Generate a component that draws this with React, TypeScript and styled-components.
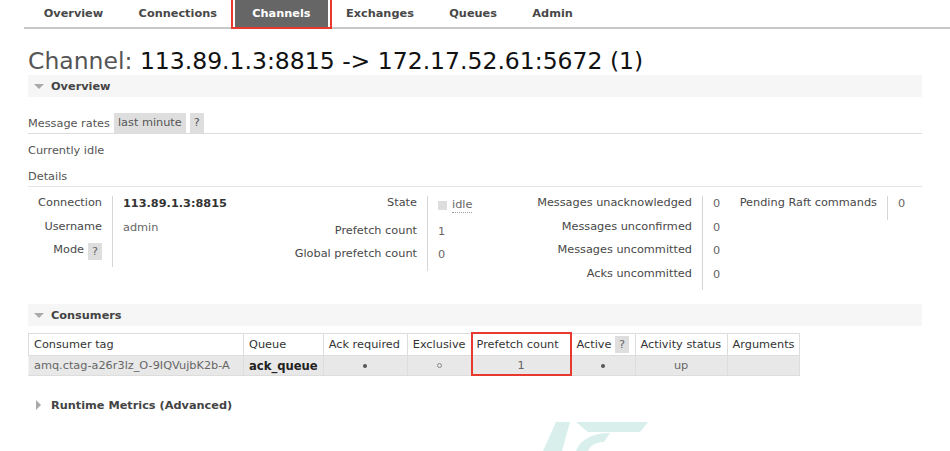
import React from "react";
import styled, { createGlobalStyle } from "styled-components";

const Global = createGlobalStyle`
  html, body { margin: 0; padding: 0; background: #fff; }
  body {
    font-family: "DejaVu Sans", Verdana, sans-serif;
    font-size: 11.3px;
    color: #484848;
    width: 950px;
    height: 451px;
    overflow: hidden;
  }
`;

const Page = styled.div`
  position: relative;
  width: 950px;
  height: 451px;
`;

const Nav = styled.nav`
  margin-left: 24px;
  border-bottom: 2px solid #c8c8c8;
  height: 27px;
`;

const TabList = styled.ul`
  list-style: none;
  margin: 0;
  padding: 0 0 0 2px;
  display: flex;
  height: 27px;
`;

const Tab = styled.li<{ $active?: boolean; $marked?: boolean }>`
  position: relative;
  padding: 0 17.7px;
  line-height: 27px;
  font-weight: bold;
  color: ${(p) => (p.$active ? "#fff" : "#484848")};
  background: ${(p) => (p.$active ? "#666" : "transparent")};
  ${(p) =>
    p.$marked &&
    `&::after {
      content: "";
      position: absolute;
      left: -4px; right: -4px; top: -2px; bottom: -2px;
      border: 2px solid #e8392f;
    }`}
`;

const Main = styled.main`
  padding: 0 28px;
`;

const Title = styled.h1`
  margin: 18px 0 0;
  font-size: 23.5px;
  line-height: 28px;
  font-weight: normal;
  color: #555;
  white-space: nowrap;
`;

const TitleName = styled.span`
  color: #111;
`;

const SectionHeader = styled.div<{ $open?: boolean }>`
  display: flex;
  align-items: center;
  height: 22px;
  background: ${(p) => (p.$open ? "#f6f6f6" : "transparent")};
  padding-left: 6px;
  font-weight: bold;
  color: #444;
  gap: 7px;
`;

const TriDown = styled.span`
  width: 0;
  height: 0;
  border-left: 5px solid transparent;
  border-right: 5px solid transparent;
  border-top: 5px solid #aaa;
`;

const TriRight = styled.span`
  width: 0;
  height: 0;
  margin-left: 2px;
  margin-right: 3px;
  border-top: 5px solid transparent;
  border-bottom: 5px solid transparent;
  border-left: 5px solid #aaa;
`;

const RatesRow = styled.div`
  display: flex;
  align-items: center;
  gap: 4px;
  margin-top: 16px;
  height: 20px;
  border-bottom: 1px solid #ddd;
  color: #555;
`;

const Pill = styled.span`
  background: #dedede;
  padding: 0 4px;
  line-height: 20px;
  color: #555;
`;

const Help = styled.span`
  background: #dedede;
  padding: 0 4px;
  line-height: 17px;
  display: inline-block;
  color: #666;
`;

const Line = styled.div`
  margin-top: 7px;
  line-height: 20px;
  color: #555;
`;

const SubHeading = styled.div`
  margin-top: 6px;
  line-height: 19px;
  border-bottom: 1px solid #e4e4e4;
  color: #555;
`;

const FactsRow = styled.div`
  display: flex;
  margin-top: 9px;
`;

const Facts = styled.div<{ $th: number; $td: number }>`
  display: grid;
  grid-template-columns: ${(p) => p.$th}px ${(p) => p.$td}px;
  grid-auto-rows: auto;
  align-content: start;
`;

const FactLabel = styled.div`
  text-align: right;
  padding: 0 10px 0 0;
  height: 23.5px;
  line-height: 14px;
  color: #484848;
  white-space: nowrap;
  display: flex;
  justify-content: flex-end;
  align-items: flex-start;
  gap: 4px;
`;

const FactValue = styled.div<{ $bold?: boolean; $pad?: number; $tall?: boolean }>`
  border-left: 1px solid #d6d6d6;
  padding: ${(p) => p.$pad ?? 0}px 0 0 10px;
  height: ${(p) => (p.$tall ? 27.5 : 23.5)}px;
  box-sizing: border-box;
  line-height: 14px;
  font-weight: ${(p) => (p.$bold ? "bold" : "normal")};
  color: ${(p) => (p.$bold ? "#333" : "#666")};
  white-space: nowrap;
  display: flex;
  align-items: flex-start;
`;

const StateBox = styled.span`
  display: inline-block;
  width: 9px;
  height: 9px;
  background: #ddd;
  margin: 3px 5px 0 0;
`;

const Abbr = styled.span`
  border-bottom: 1px dotted #999;
  color: #666;
`;

const ConsumersHeader = styled(SectionHeader)`
  margin-top: 14px;
`;

const Table = styled.table`
  margin-top: 7px;
  border-collapse: collapse;
  table-layout: fixed;
  border: 1px solid #ddd;
`;

const HeadCell = styled.th<{ $w: number; $marked?: boolean }>`
  position: relative;
  width: ${(p) => p.$w}px;
  box-sizing: border-box;
  height: 22px;
  padding: 0 5px;
  font-weight: normal;
  text-align: left;
  color: #333;
  border: 1px solid #ddd;
  background: #fff;
  white-space: nowrap;
  ${(p) =>
    p.$marked &&
    `&::after {
      content: "";
      position: absolute;
      left: -1px; right: -1px; top: -2px; bottom: -21px;
      border: 2px solid #e8392f;
      z-index: 2;
    }`}
`;

const DataCell = styled.td<{ $center?: boolean; $bold?: boolean }>`
  height: 20px;
  box-sizing: border-box;
  padding: 0 5px;
  line-height: 18px;
  background: #e8e8e8;
  border: 1px solid #ddd;
  border-top: none;
  border-left-color: #f3f3f3;
  text-align: ${(p) => (p.$center ? "center" : "left")};
  font-weight: ${(p) => (p.$bold ? "bold" : "normal")};
  color: ${(p) => (p.$bold ? "#222" : "#666")};
  font-size: ${(p) => (p.$bold ? "11.6px" : "11.3px")};
  white-space: nowrap;
`;

const Dot = styled.span<{ $open?: boolean }>`
  display: inline-block;
  width: 4px;
  height: 4px;
  border-radius: 50%;
  vertical-align: middle;
  box-sizing: border-box;
  ${(p) =>
    p.$open
      ? "border: 1px solid #888; width: 5px; height: 5px;"
      : "background: #555;"}
`;

const RuntimeHeader = styled(SectionHeader)`
  margin-top: 18px;
`;

const Watermark = styled.svg`
  position: absolute;
  left: 540px;
  top: 418px;
`;

const tabs = ["Overview", "Connections", "Channels", "Exchanges", "Queues", "Admin"];

const columns: { label: React.ReactNode; w: number; marked?: boolean }[] = [
  { label: "Consumer tag", w: 215 },
  { label: "Queue", w: 79 },
  { label: "Ack required", w: 84 },
  { label: "Exclusive", w: 62 },
  { label: "Prefetch count", w: 100, marked: true },
  {
    label: (
      <>
        Active <Help>?</Help>
      </>
    ),
    w: 64,
  },
  { label: "Activity status", w: 92 },
  { label: "Arguments", w: 72 },
];

export default function App() {
  return (
    <Page>
      <Global />
      <Nav>
        <TabList>
          {tabs.map((t) => (
            <Tab key={t} $active={t === "Channels"} $marked={t === "Channels"}>
              {t}
            </Tab>
          ))}
        </TabList>
      </Nav>
      <Main>
        <Title>
          Channel: <TitleName>113.89.1.3:8815 -&gt; 172.17.52.61:5672 (1)</TitleName>
        </Title>

        <SectionHeader $open>
          <TriDown />
          Overview
        </SectionHeader>

        <RatesRow>
          Message rates <Pill>last minute</Pill>
          <Pill>?</Pill>
        </RatesRow>
        <Line>Currently idle</Line>
        <SubHeading>Details</SubHeading>

        <FactsRow>
          <Facts $th={84} $td={172}>
            <FactLabel>Connection</FactLabel>
            <FactValue $bold $pad={1}>113.89.1.3:8815</FactValue>
            <FactLabel>Username</FactLabel>
            <FactValue $pad={1}>admin</FactValue>
            <FactLabel>
              Mode <Help>?</Help>
            </FactLabel>
            <FactValue />
          </Facts>
          <Facts $th={143} $td={102}>
            <FactLabel>State</FactLabel>
            <FactValue $pad={2} $tall>
              <StateBox />
              <Abbr>idle</Abbr>
            </FactValue>
            <FactLabel>Prefetch count</FactLabel>
            <FactValue $pad={1}>1</FactValue>
            <FactLabel>Global prefetch count</FactLabel>
            <FactValue $pad={1}>0</FactValue>
          </Facts>
          <Facts $th={173} $td={27}>
            <FactLabel>Messages unacknowledged</FactLabel>
            <FactValue $pad={1}>0</FactValue>
            <FactLabel>Messages unconfirmed</FactLabel>
            <FactValue $pad={1}>0</FactValue>
            <FactLabel>Messages uncommitted</FactLabel>
            <FactValue $pad={1}>0</FactValue>
            <FactLabel>Acks uncommitted</FactLabel>
            <FactValue $pad={1}>0</FactValue>
          </Facts>
          <Facts $th={158} $td={40}>
            <FactLabel>Pending Raft commands</FactLabel>
            <FactValue $pad={1}>0</FactValue>
          </Facts>
        </FactsRow>

        <ConsumersHeader $open>
          <TriDown />
          Consumers
        </ConsumersHeader>

        <Table>
          <thead>
            <tr>
              {columns.map((c, i) => (
                <HeadCell key={i} $w={c.w} $marked={c.marked}>
                  {c.label}
                </HeadCell>
              ))}
            </tr>
          </thead>
          <tbody>
            <tr>
              <DataCell>amq.ctag-a26r3lz_O-9IQVujbK2b-A</DataCell>
              <DataCell $bold>ack_queue</DataCell>
              <DataCell $center>
                <Dot />
              </DataCell>
              <DataCell $center>
                <Dot $open />
              </DataCell>
              <DataCell $center>1</DataCell>
              <DataCell $center>
                <Dot />
              </DataCell>
              <DataCell $center>up</DataCell>
              <DataCell />
            </tr>
          </tbody>
        </Table>

        <RuntimeHeader>
          <TriRight />
          Runtime Metrics (Advanced)
        </RuntimeHeader>
      </Main>

      <Watermark width="120" height="33" viewBox="0 0 120 33">
        <polygon points="3,33 16,4 30,4 22,33" fill="#d8efeb" />
        <polygon points="36,4 108,4 100,14 48,14" fill="#d8efeb" />
        <path d="M36,33 C40,22 52,15 70,15 L64,24 C55,24 50,28 48,33 Z" fill="#d8efeb" />
      </Watermark>
    </Page>
  );
}
